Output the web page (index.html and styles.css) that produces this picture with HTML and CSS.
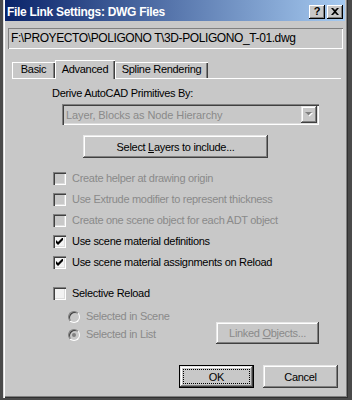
FILE: index.html
```html
<!DOCTYPE html>
<html lang="en">
<head>
    <meta charset="UTF-8">
    <meta name="viewport" content="width=device-width, initial-scale=1.0">
    <title>File Link Settings: DWG Files</title>
    <link rel="stylesheet" href="styles.css">
</head>
<body>
    <div class="window">
        <div class="titlebar">
            <span class="title">File Link Settings: DWG Files</span>
            <div class="caption-buttons">
                <span class="cap-btn help">?</span>
                <span class="cap-btn close">
                    <svg width="8" height="7" viewBox="0 0 8 7"><path d="M0 0h2l2 2 2-2h2L5 3.5 8 7H6L4 5 2 7H0l3-3.5z" fill="#000"/></svg>
                </span>
            </div>
        </div>

        <div class="path-field">F:\PROYECTO\POLIGONO T\3D-POLIGONO_T-01.dwg</div>

        <div class="tabs">
            <div class="tab tab-basic">Basic</div>
            <div class="tab tab-advanced active">Advanced</div>
            <div class="tab tab-spline">Spline Rendering</div>
            <div class="tab-fill"></div>
        </div>

        <div class="panel">
            <div class="label">Derive AutoCAD Primitives By:</div>
            <div class="dropdown">
                <span class="dropdown-text">Layer, Blocks as Node Hierarchy</span>
                <span class="drop-btn">
                    <svg width="8" height="5" viewBox="0 0 8 5"><path d="M1 1h7L4.5 4.5z" fill="#fff"/><path d="M0 0h7L3.5 3.5z" fill="#808080"/></svg>
                </span>
            </div>
            <button class="btn btn-layers"><span>Select <u>L</u>ayers to include...</span></button>

            <div class="check disabled"><span class="box"></span>Create helper at drawing origin</div>
            <div class="check disabled"><span class="box"></span>Use Extrude modifier to represent thickness</div>
            <div class="check disabled"><span class="box"></span>Create one scene object for each ADT object</div>
            <div class="check checked"><span class="box"><svg width="7" height="7" viewBox="0 0 7 7"><path d="M0 2v3l2 2 5-5V-1L2 4z" fill="#000"/></svg></span>Use scene material definitions</div>
            <div class="check checked"><span class="box"><svg width="7" height="7" viewBox="0 0 7 7"><path d="M0 2v3l2 2 5-5V-1L2 4z" fill="#000"/></svg></span>Use scene material assignments on Reload</div>

            <div class="check selective"><span class="box"></span>Selective Reload</div>

            <div class="reload-row">
                <div class="radios">
                    <div class="radio"><span class="circle"></span>Selected in Scene</div>
                    <div class="radio selected"><span class="circle"></span>Selected in List</div>
                </div>
                <button class="btn btn-linked" disabled><span>Linked <u>O</u>bjects...</span></button>
            </div>
        </div>

        <div class="footer">
            <button class="btn btn-default"><span class="focus">OK</span></button>
            <button class="btn">Cancel</button>
        </div>
    </div>
</body>
</html>
```

FILE: styles.css
```css
body {
    margin: 0;
    width: 352px;
    height: 400px;
    overflow: hidden;
    background-color: #4a4a4a;
    font-family: "Liberation Sans", Arial, sans-serif;
    font-size: 11px;
    letter-spacing: -0.3px;
    color: #000;
}
.window {
    box-sizing: border-box;
    width: 345px;
    height: 398px;
    margin-left: 3px;
    padding: 0 3px 3px 2px;
    background-color: #c8c8c8;
    box-shadow: inset 1px 0 #dcdcdc, inset 2px 0 #fff,
                inset -1px -1px #303030, inset -2px -2px #808080;
}
.titlebar {
    box-sizing: border-box;
    height: 21px;
    padding: 2px 0 0 2px;
    display: flex;
    align-items: center;
    background: linear-gradient(to right, #0a246a, #a6caf0);
}
.title {
    flex: 1;
    color: #fff;
    font-weight: bold;
    font-size: 12px;
    line-height: 14px;
}
.caption-buttons {
    display: flex;
    gap: 2px;
    margin-right: 2px;
}
.cap-btn {
    width: 16px;
    height: 14px;
    display: flex;
    align-items: center;
    justify-content: center;
    background-color: #c8c8c8;
    box-shadow: inset -1px -1px #000, inset 1px 1px #fff, inset -2px -2px #808080;
    font-weight: bold;
    font-size: 11px;
    letter-spacing: 0;
}
.help {
    padding-bottom: 1px;
    box-sizing: border-box;
}
.path-field {
    box-sizing: border-box;
    height: 21px;
    margin: 7px 2px 0 3px;
    padding: 3px 0 0 3px;
    font-size: 12px;
    line-height: 15px;
    letter-spacing: -0.4px;
    white-space: nowrap;
    box-shadow: inset 1px 1px #808080, inset -1px -1px #fff;
}
.tabs {
    display: flex;
    align-items: flex-end;
    height: 19px;
    margin: 11px 4px 0 7px;
}
.tab {
    box-sizing: border-box;
    height: 17px;
    line-height: 15px;
    text-align: center;
    border-bottom: 1px solid #fff;
    box-shadow: inset 1px 1px #fff, inset -1px 0 #404040, inset -2px 0 #808080;
}
.tab.active {
    height: 19px;
    border-bottom: none;
    line-height: 18px;
}
.tab-basic { width: 43px; }
.tab-advanced { width: 60px; }
.tab-spline { width: 93px; }
.tab-fill {
    flex: 1;
    border-bottom: 1px solid #fff;
}
.panel {
    padding-left: 47px;
}
.label {
    margin-top: 8px;
    line-height: 13px;
}
.dropdown {
    box-sizing: border-box;
    width: 257px;
    height: 21px;
    margin: 4px 0 0 10px;
    padding: 2px;
    display: flex;
    align-items: center;
    box-shadow: inset 1px 1px #808080, inset 2px 2px #404040,
                inset -1px -1px #fff, inset -2px -2px #dcdcdc;
}
.dropdown-text {
    flex: 1;
    padding-left: 2px;
    color: #8a8a8a;
    letter-spacing: -0.1px;
    white-space: nowrap;
}
.drop-btn {
    width: 16px;
    height: 17px;
    display: flex;
    align-items: center;
    justify-content: center;
    background-color: #c8c8c8;
    box-shadow: inset -1px -1px #404040, inset 1px 1px #e8e8e8, inset -2px -2px #808080, inset 2px 2px #fff;
}
.btn {
    box-sizing: border-box;
    display: flex;
    align-items: center;
    justify-content: center;
    padding: 0;
    border: none;
    background-color: #c8c8c8;
    font-family: inherit;
    font-size: 11px;
    letter-spacing: -0.3px;
    color: #000;
    white-space: nowrap;
    box-shadow: inset -1px -1px #404040, inset 1px 1px #e8e8e8,
                inset -2px -2px #808080, inset 2px 2px #fff;
}
.btn-layers {
    width: 185px;
    height: 23px;
    margin: 10px 0 0 31px;
}
.check {
    display: flex;
    align-items: center;
    height: 13px;
    margin-top: 8px;
    line-height: 13px;
    white-space: nowrap;
}
.btn-layers + .check {
    margin-top: 14px;
}
.box {
    box-sizing: border-box;
    width: 13px;
    height: 13px;
    margin: 0 6px 0 1px;
    display: flex;
    align-items: center;
    justify-content: center;
    background-color: #f2f2f2;
    box-shadow: inset 1px 1px #808080, inset 2px 2px #404040,
                inset -1px -1px #fff, inset -2px -2px #dcdcdc;
}
.check.disabled {
    color: #8a8a8a;
}
.check.disabled .box {
    background-color: #c8c8c8;
}
.check.selective {
    margin-top: 18px;
}
.reload-row {
    display: flex;
    align-items: flex-start;
    margin-top: 10px;
}
.radios {
    width: 148px;
    margin-left: 16px;
    display: flex;
    flex-direction: column;
    gap: 5px;
}
.radio {
    display: flex;
    align-items: center;
    height: 13px;
    line-height: 13px;
    color: #8a8a8a;
}
.circle {
    box-sizing: border-box;
    width: 12px;
    height: 12px;
    margin-right: 6px;
    border-radius: 50%;
    display: flex;
    align-items: center;
    justify-content: center;
    border: 1px solid #808080;
    border-right-color: #fff;
    border-bottom-color: #fff;
    background-color: #c8c8c8;
    box-shadow: inset 1px 1px #404040;
}
.radio.selected .circle::after {
    content: "";
    width: 4px;
    height: 4px;
    border-radius: 50%;
    background-color: #808080;
}
.btn-linked {
    width: 103px;
    height: 22px;
    margin-top: 12px;
    color: #8a8a8a;
}
.footer {
    display: flex;
    justify-content: flex-end;
    gap: 9px;
    margin: 21px 7px 0 0;
}
.footer .btn {
    width: 75px;
    height: 23px;
}
.btn-default {
    border: 1px solid #000;
    padding: 3px;
}
.focus {
    flex: 1;
    align-self: stretch;
    display: flex;
    align-items: center;
    justify-content: center;
    border: 1px dotted #000;
}
```
